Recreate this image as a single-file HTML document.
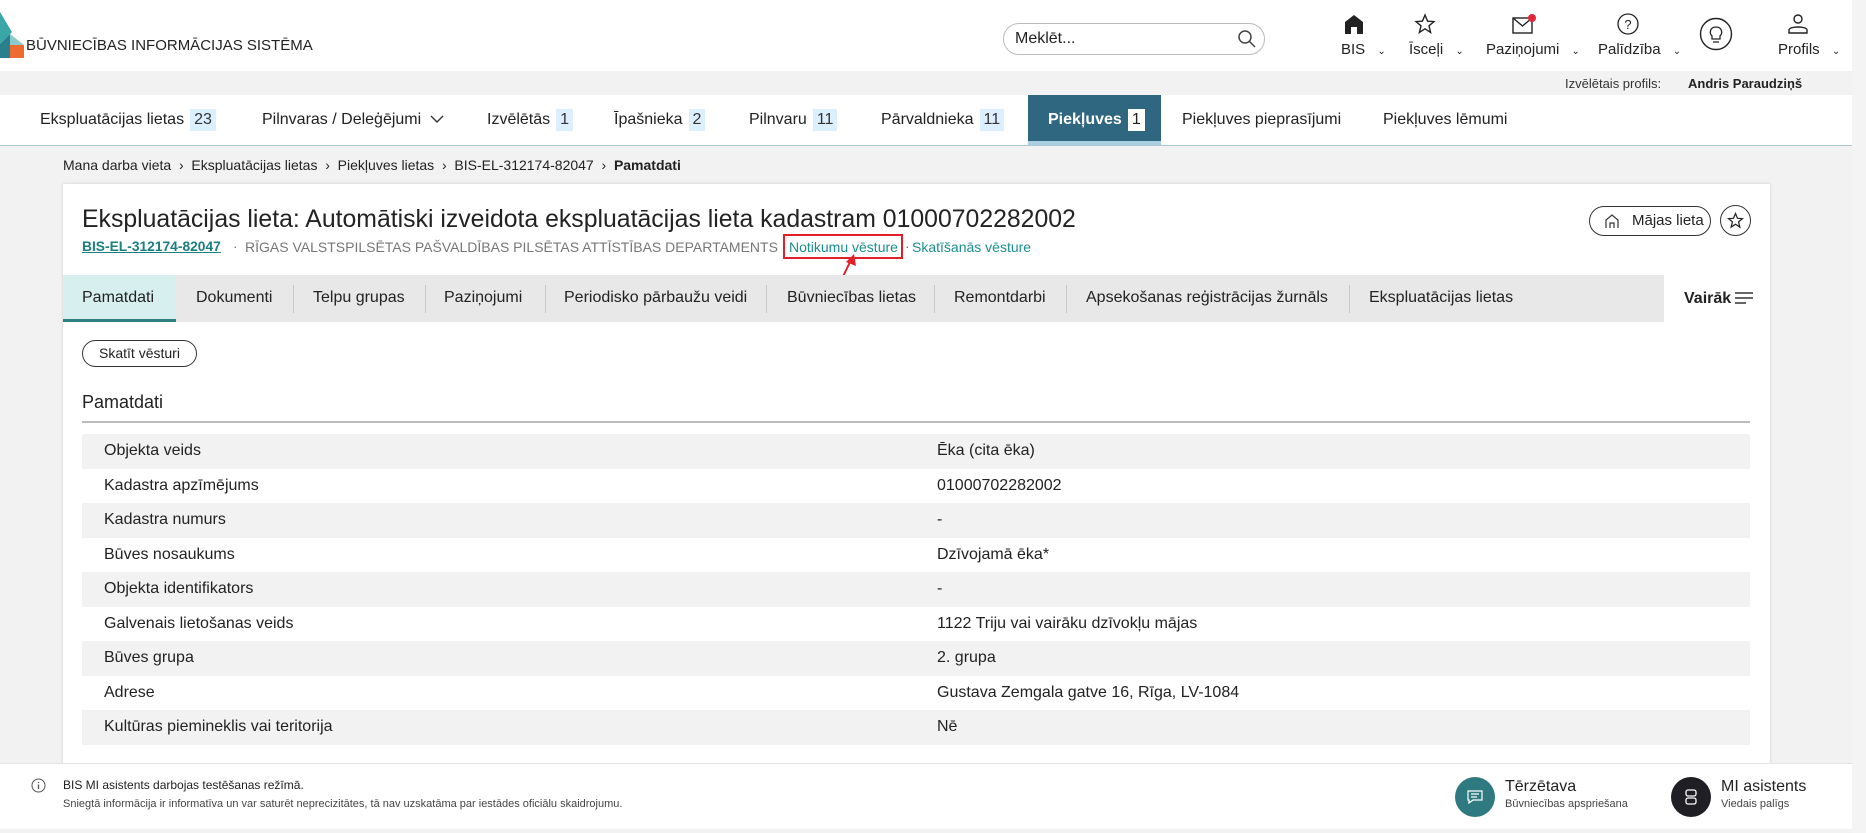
<!DOCTYPE html>
<html><head><meta charset="utf-8"><style>
*{box-sizing:border-box;margin:0;padding:0}
body{width:1866px;height:833px;overflow:hidden;background:#f2f2f2;font-family:"Liberation Sans",sans-serif;color:#222;position:relative}
.a{position:absolute;white-space:nowrap}
.badge{display:inline-block;background:#dcefff;color:#333;padding:0 4px;height:22px;line-height:22px;margin-left:6px}
.tab{font-size:16px;top:109px;line-height:22px}
.st{font-size:16px;top:289px;color:#222}
.sep{position:absolute;top:285px;width:1px;height:28px;background:#c8c8c8}
.row{position:absolute;left:82px;width:1668px;height:34.5px;font-size:16px;line-height:34.5px}
.row span{position:absolute;left:22px}
.row b{position:absolute;left:855px;font-weight:normal}
.g{background:#f2f2f2}
.sl{top:239px;font-size:13.8px;color:#777}
</style></head><body>
<div class="a" style="left:0;top:0;width:1852px;height:71px;background:#fff"></div>
<svg class="a" style="left:0;top:12px" width="24" height="46" viewBox="0 0 24 46"><polygon points="0,0 12,20 0,32" fill="#3aa6a6"/><polygon points="0,32 10,22 10,46 0,46" fill="#2a7f8f"/><polygon points="10,33 24,33 24,46 10,46" fill="#ee6b2f"/><polygon points="10,22 24,33 10,33" fill="#8cc9c9"/></svg>
<div class="a" style="left:26px;top:37px;font-size:15px;color:#222">BŪVNIECĪBAS INFORMĀCIJAS SISTĒMA</div>
<div class="a" style="left:1003px;top:23px;width:262px;height:32px;border:1px solid #bbb;border-radius:16px;background:#fff"></div>
<div class="a" style="left:1015px;top:30px;font-size:16px;color:#222">Meklēt...</div>
<svg class="a" style="left:1237px;top:29px" width="20" height="20" viewBox="0 0 20 20"><circle cx="8" cy="8" r="6" fill="none" stroke="#444" stroke-width="1.5"/><line x1="12.5" y1="12.5" x2="18" y2="18" stroke="#444" stroke-width="1.5"/></svg>
<svg class="a" style="left:1343px;top:13px" width="22" height="22" viewBox="0 0 22 22"><path d="M2 9 L11 2 L20 9 V21 H14 V14 H8 V21 H2Z" fill="#222"/></svg>
<svg class="a" style="left:1414px;top:13px" width="22" height="22" viewBox="0 0 22 22"><path d="M11 2 L13.6 8.2 L20 8.6 L15 12.8 L16.6 19.5 L11 15.8 L5.4 19.5 L7 12.8 L2 8.6 L8.4 8.2Z" fill="none" stroke="#222" stroke-width="1.4"/></svg>
<svg class="a" style="left:1511px;top:13px" width="26" height="22" viewBox="0 0 26 22"><rect x="2" y="5" width="19" height="15" fill="none" stroke="#222" stroke-width="1.4"/><path d="M2 5 L11.5 13 L21 5" fill="none" stroke="#222" stroke-width="1.4"/><circle cx="21" cy="5" r="4" fill="#e0283a"/></svg>
<svg class="a" style="left:1616px;top:12px" width="24" height="24" viewBox="0 0 24 24"><circle cx="12" cy="12" r="10" fill="none" stroke="#222" stroke-width="1.3"/><text x="12" y="17" text-anchor="middle" font-size="13" font-family="Liberation Sans" fill="#222">?</text></svg>
<svg class="a" style="left:1699px;top:17px" width="34" height="34" viewBox="0 0 34 34"><circle cx="17" cy="17" r="15.5" fill="none" stroke="#222" stroke-width="1.4"/><path d="M13 19 C10 16 11 10 17 10 C23 10 24 16 21 19 V22 H13Z M14 25 H20" fill="none" stroke="#222" stroke-width="1.3"/></svg>
<svg class="a" style="left:1786px;top:12px" width="24" height="24" viewBox="0 0 24 24"><circle cx="12" cy="7" r="4" fill="none" stroke="#222" stroke-width="1.4"/><path d="M3 21 V18 C3 14 21 14 21 18 V21Z" fill="none" stroke="#222" stroke-width="1.4"/></svg>
<div class="a" style="left:1341px;top:41px;font-size:15px">BIS <span style="font-size:10px;margin-left:8px">&#8964;</span></div>
<div class="a" style="left:1409px;top:41px;font-size:15px">Īsceļi <span style="font-size:10px;margin-left:8px">&#8964;</span></div>
<div class="a" style="left:1486px;top:41px;font-size:15px">Paziņojumi <span style="font-size:10px;margin-left:8px">&#8964;</span></div>
<div class="a" style="left:1598px;top:41px;font-size:15px">Palīdzība <span style="font-size:10px;margin-left:8px">&#8964;</span></div>
<div class="a" style="left:1778px;top:41px;font-size:15px">Profils <span style="font-size:10px;margin-left:8px">&#8964;</span></div>
<div class="a" style="left:1852px;top:0;width:14px;height:833px;background:#f4f4f4"></div>
<div class="a" style="left:1565px;top:76px;font-size:13px;color:#333">Izvēlētais profils:</div>
<div class="a" style="left:1688px;top:76px;font-size:13px;font-weight:bold;color:#222">Andris Paraudziņš</div>
<div class="a" style="left:0;top:95px;width:1852px;height:51px;background:#fff;border-bottom:1px solid #a8c8d8"></div>
<div class="a" style="left:1028px;top:95px;width:133px;height:50px;background:#2f6680;border-bottom:4px solid #a9cfe0"></div>
<div class="a tab" style="left:40px">Ekspluatācijas lietas<span class="badge">23</span></div>
<div class="a tab" style="left:262px">Pilnvaras / Deleģējumi</div>
<svg class="a" style="left:430px;top:114px" width="14" height="10" viewBox="0 0 14 10"><path d="M1 2 L7 8 L13 2" fill="none" stroke="#333" stroke-width="1.4"/></svg>
<div class="a tab" style="left:487px">Izvēlētās<span class="badge">1</span></div>
<div class="a tab" style="left:614px">Īpašnieka<span class="badge">2</span></div>
<div class="a tab" style="left:749px">Pilnvaru<span class="badge">11</span></div>
<div class="a tab" style="left:881px">Pārvaldnieka<span class="badge">11</span></div>
<div class="a tab" style="left:1048px;color:#fff;font-weight:bold">Piekļuves<span class="badge" style="background:#fff;color:#222;font-weight:normal">1</span></div>
<div class="a tab" style="left:1182px">Piekļuves pieprasījumi</div>
<div class="a tab" style="left:1383px">Piekļuves lēmumi</div>
<div class="a" style="left:63px;top:157px;font-size:14px;color:#222">Mana darba vieta &nbsp;&#8250;&nbsp; Ekspluatācijas lietas &nbsp;&#8250;&nbsp; Piekļuves lietas &nbsp;&#8250;&nbsp; BIS-EL-312174-82047 &nbsp;&#8250;&nbsp; <b>Pamatdati</b></div>
<div class="a" style="left:63px;top:184px;width:1707px;height:600px;background:#fff;box-shadow:0 0 3px rgba(0,0,0,.15)"></div>
<div class="a" style="left:82px;top:206px;font-size:24.8px;color:#222">Ekspluatācijas lieta: Automātiski izveidota ekspluatācijas lieta kadastram 01000702282002</div>
<div class="a sl" style="left:82px;color:#1a7f7f;font-weight:bold;text-decoration:underline">BIS-EL-312174-82047</div>
<div class="a sl" style="left:233px">·</div>
<div class="a sl" style="left:245px;font-size:14px">RĪGAS VALSTSPILSĒTAS PAŠVALDĪBAS PILSĒTAS ATTĪSTĪBAS DEPARTAMENTS</div>
<div class="a sl" style="left:789px;color:#1a8f8f;font-size:14px">Notikumu vēsture</div>
<div class="a sl" style="left:905px">·</div>
<div class="a sl" style="left:912px;color:#1a8f8f;font-size:14px">Skatīšanās vēsture</div>
<div class="a" style="left:783px;top:234px;width:120px;height:25px;border:2px solid #e3202a"></div>
<svg class="a" style="left:832px;top:252px" width="30" height="40" viewBox="0 0 30 40"><line x1="6" y1="35" x2="19" y2="8" stroke="#e3202a" stroke-width="2"/><polygon points="22,2 24,14 14,10" fill="#e3202a"/></svg>
<div class="a" style="left:1589px;top:206px;width:122px;height:30px;border:1px solid #333;border-radius:15px;font-size:15px;line-height:28px;padding-left:42px">Mājas lieta</div>
<svg class="a" style="left:1604px;top:213px" width="16" height="16" viewBox="0 0 16 16"><path d="M2 15 V7 L8 2 L14 7 V15 M6 15 V10 H10 V15" fill="none" stroke="#333" stroke-width="1.2"/></svg>
<div class="a" style="left:1720px;top:205px;width:31px;height:31px;border:1px solid #333;border-radius:50%"></div>
<svg class="a" style="left:1727px;top:212px" width="17" height="17" viewBox="0 0 22 22"><path d="M11 2 L13.6 8.2 L20 8.6 L15 12.8 L16.6 19.5 L11 15.8 L5.4 19.5 L7 12.8 L2 8.6 L8.4 8.2Z" fill="none" stroke="#222" stroke-width="1.6"/></svg>
<div class="a" style="left:63px;top:275px;width:1601px;height:47px;background:#e8e8e8"></div>
<div class="a" style="left:63px;top:275px;width:113px;height:47px;background:#d8eff0;border-bottom:3px solid #2f7f80"></div>
<div class="a st" style="left:82px">Pamatdati</div>
<div class="a st" style="left:196px">Dokumenti</div>
<div class="a st" style="left:313px">Telpu grupas</div>
<div class="a st" style="left:444px">Paziņojumi</div>
<div class="a st" style="left:564px">Periodisko pārbaužu veidi</div>
<div class="a st" style="left:787px">Būvniecības lietas</div>
<div class="a st" style="left:954px">Remontdarbi</div>
<div class="a st" style="left:1086px">Apsekošanas reģistrācijas žurnāls</div>
<div class="a st" style="left:1369px">Ekspluatācijas lietas</div>
<div class="sep" style="left:293px"></div><div class="sep" style="left:425px"></div><div class="sep" style="left:545px"></div><div class="sep" style="left:766px"></div><div class="sep" style="left:934px"></div><div class="sep" style="left:1066px"></div><div class="sep" style="left:1349px"></div>
<div class="a" style="left:1684px;top:290px;font-size:16px;font-weight:bold">Vairāk</div>
<svg class="a" style="left:1735px;top:291px" width="18" height="14" viewBox="0 0 18 14"><path d="M0 2H18M0 7H18M0 12H11" stroke="#333" stroke-width="1.5"/></svg>
<div class="a" style="left:82px;top:340px;width:115px;height:27px;border:1px solid #333;border-radius:14px;font-size:14px;line-height:25px;text-align:center">Skatīt vēsturi</div>
<div class="a" style="left:82px;top:392px;font-size:18px;color:#222">Pamatdati</div>
<div class="a" style="left:82px;top:421px;width:1668px;height:2px;background:#bbb"></div>
<div class="row g" style="top:434px"><span>Objekta veids</span><b>Ēka (cita ēka)</b></div>
<div class="row" style="top:468.5px"><span>Kadastra apzīmējums</span><b>01000702282002</b></div>
<div class="row g" style="top:503px"><span>Kadastra numurs</span><b>-</b></div>
<div class="row" style="top:537.5px"><span>Būves nosaukums</span><b>Dzīvojamā ēka*</b></div>
<div class="row g" style="top:572px"><span>Objekta identifikators</span><b>-</b></div>
<div class="row" style="top:606.5px"><span>Galvenais lietošanas veids</span><b>1122 Triju vai vairāku dzīvokļu mājas</b></div>
<div class="row g" style="top:641px"><span>Būves grupa</span><b>2. grupa</b></div>
<div class="row" style="top:675.5px"><span>Adrese</span><b>Gustava Zemgala gatve 16, Rīga, LV-1084</b></div>
<div class="row g" style="top:710px"><span>Kultūras piemineklis vai teritorija</span><b>Nē</b></div>
<div class="a" style="left:0;top:763px;width:1852px;height:66px;background:#fff;border-top:1px solid #e4e4e4"></div>
<svg class="a" style="left:31px;top:778px" width="15" height="15" viewBox="0 0 15 15"><circle cx="7.5" cy="7.5" r="6.5" fill="none" stroke="#555"/><path d="M7.5 6.5V11M7.5 4V5" stroke="#555" stroke-width="1.3"/></svg>
<div class="a" style="left:63px;top:778px;font-size:12px;color:#222">BIS MI asistents darbojas testēšanas režīmā.</div>
<div class="a" style="left:63px;top:798px;font-size:11px;color:#444">Sniegtā informācija ir informatīva un var saturēt neprecizitātes, tā nav uzskatāma par iestādes oficiālu skaidrojumu.</div>
<div class="a" style="left:1455px;top:777px;width:40px;height:40px;border-radius:50%;background:#2f7a80"></div>
<svg class="a" style="left:1466px;top:789px" width="18" height="16" viewBox="0 0 18 16"><path d="M2 2H16V11H7L3 14V11H2Z M5 5H13M5 8H11" fill="none" stroke="#fff" stroke-width="1.2"/></svg>
<div class="a" style="left:1505px;top:778px;font-size:16px;color:#222">Tērzētava</div>
<div class="a" style="left:1505px;top:798px;font-size:11px;color:#444">Būvniecības apspriešana</div>
<div class="a" style="left:1671px;top:777px;width:40px;height:40px;border-radius:50%;background:#1e1e24"></div>
<svg class="a" style="left:1683px;top:788px" width="16" height="18" viewBox="0 0 16 18"><rect x="3" y="2" width="10" height="6" rx="2" fill="none" stroke="#fff" stroke-width="1.3"/><rect x="3" y="10" width="10" height="6" rx="2" fill="none" stroke="#fff" stroke-width="1.3"/></svg>
<div class="a" style="left:1721px;top:778px;font-size:16px;color:#222">MI asistents</div>
<div class="a" style="left:1721px;top:798px;font-size:11px;color:#444">Viedais palīgs</div>
</body></html>
